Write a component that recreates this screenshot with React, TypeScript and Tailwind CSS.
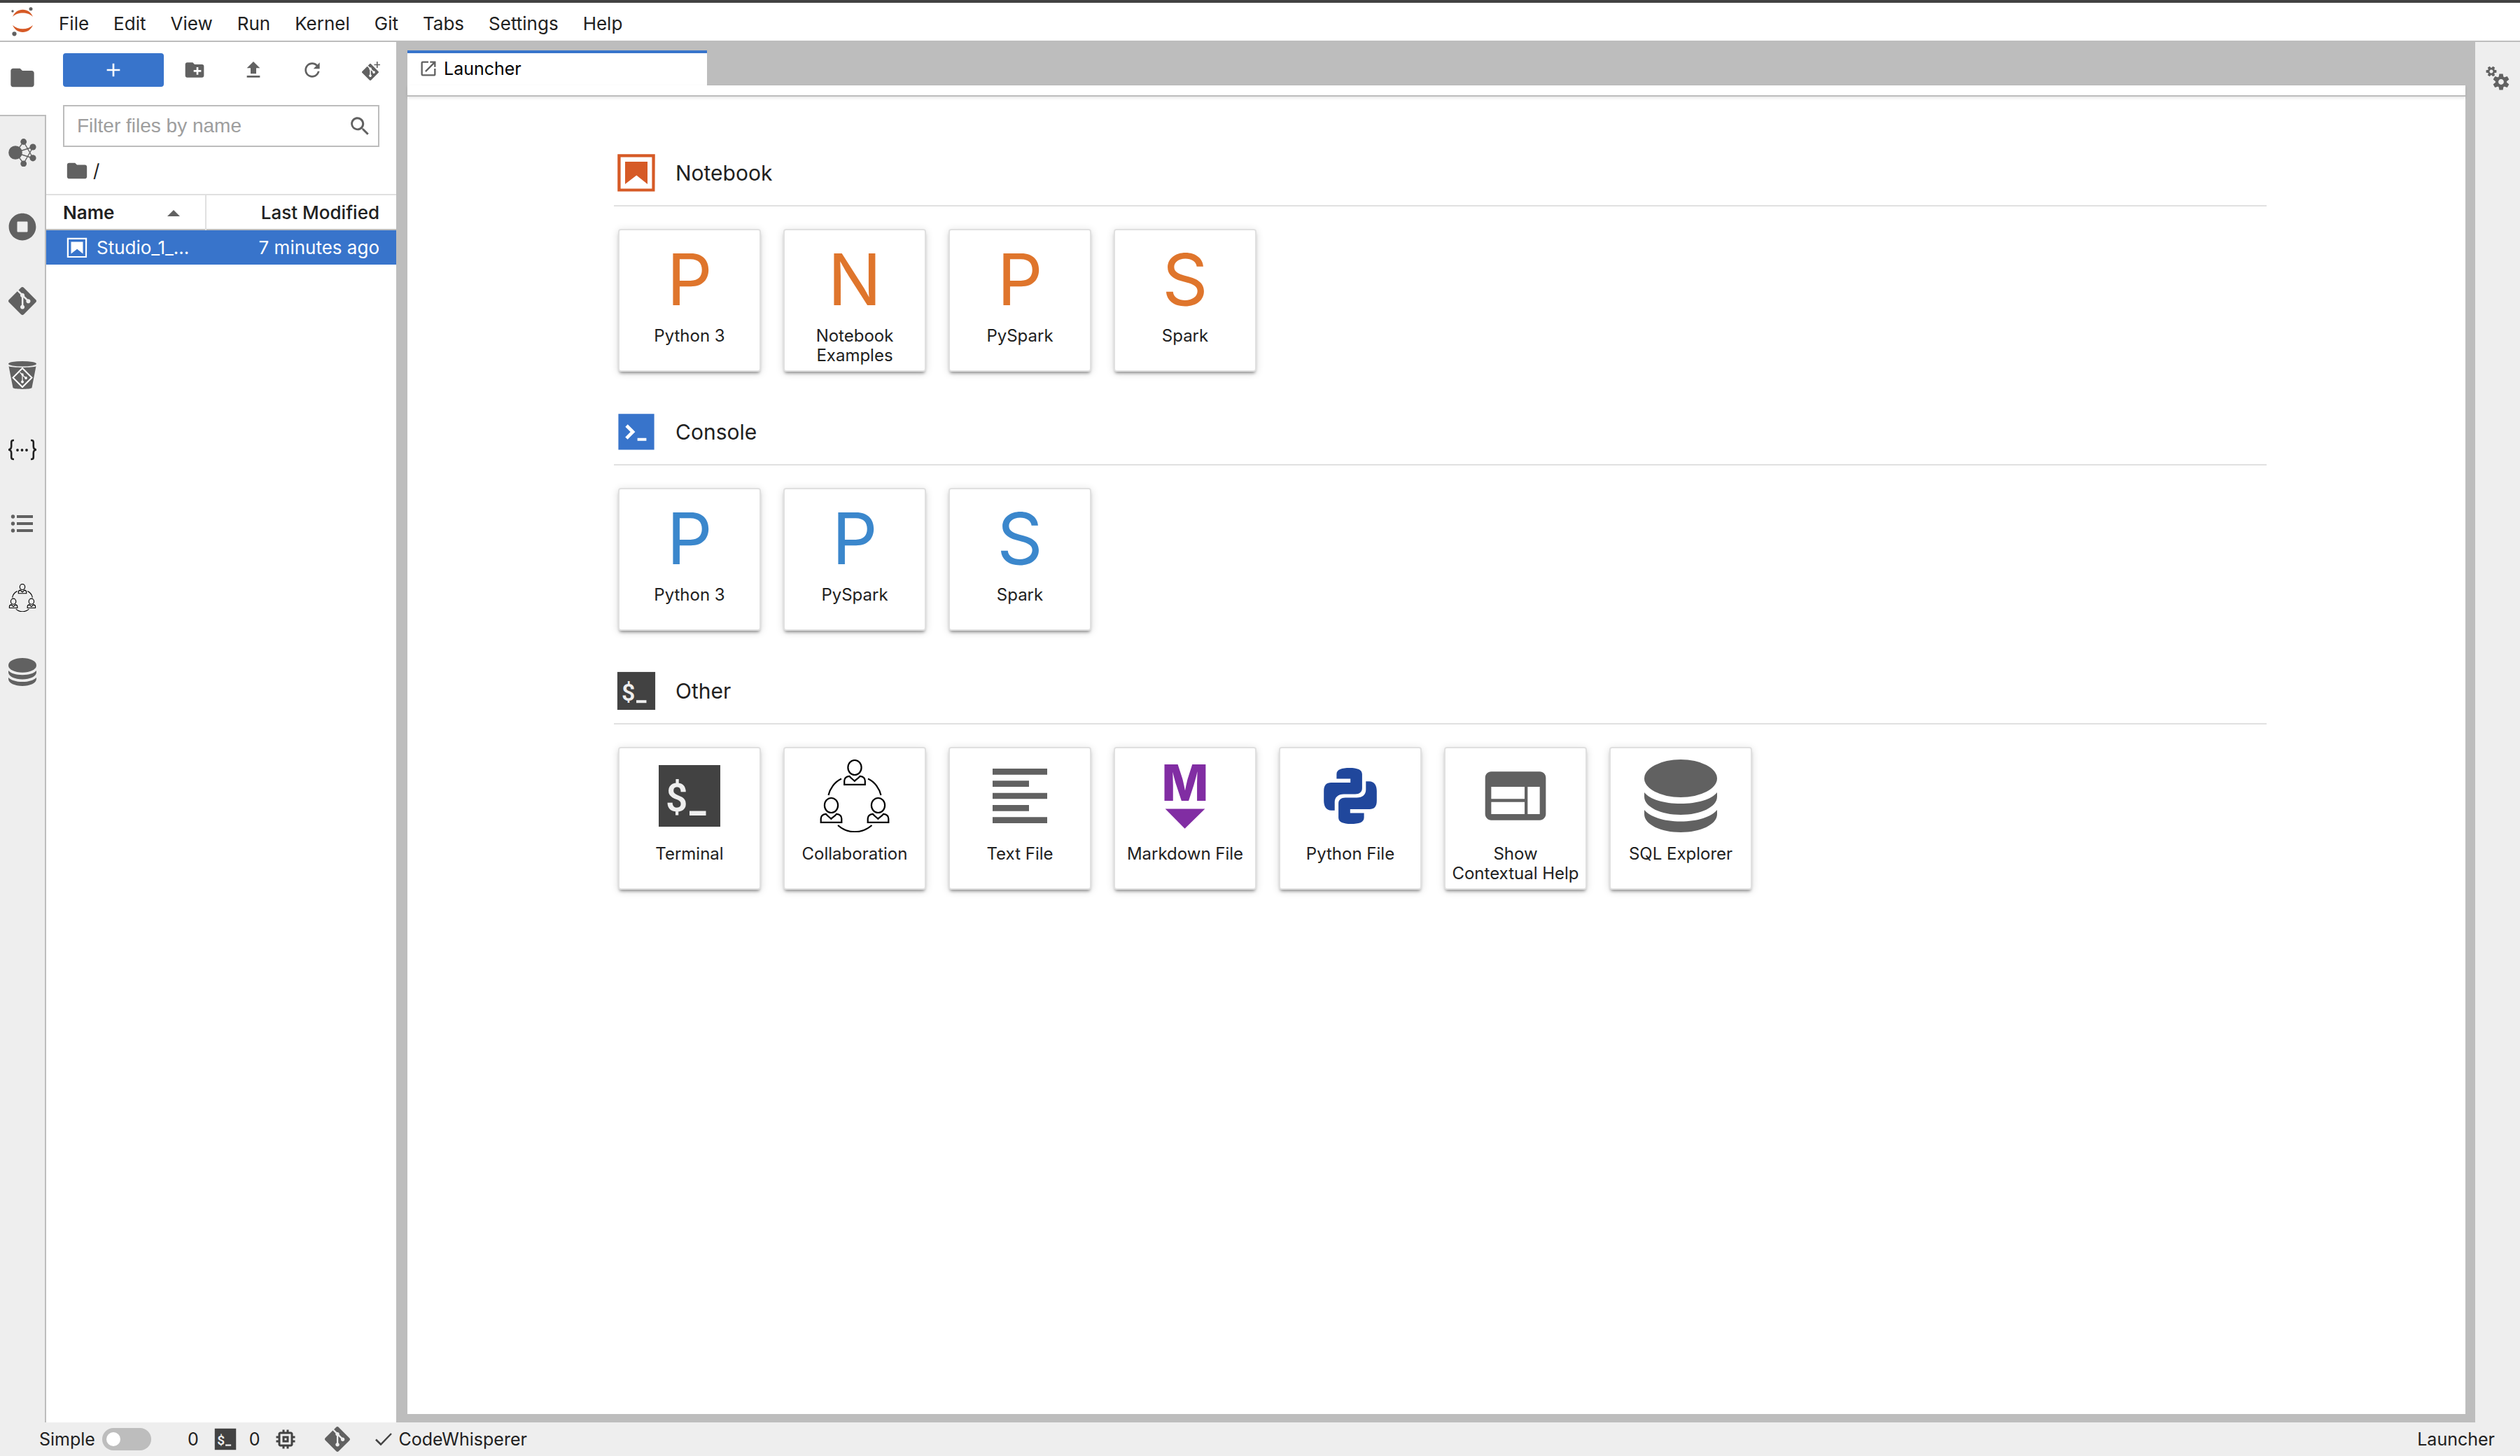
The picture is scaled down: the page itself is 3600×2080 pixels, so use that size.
import type { ReactNode } from "react";

type IconProps = { className?: string };

const GIT_PATH =
  "M23.546 10.93L13.067.452c-.604-.603-1.582-.603-2.188 0L8.708 2.627l2.76 2.76c.645-.215 1.379-.07 1.889.441.516.515.658 1.258.438 1.9l2.658 2.66c.645-.223 1.387-.078 1.9.435.721.72.721 1.884 0 2.604-.719.719-1.881.719-2.6 0-.539-.541-.674-1.337-.404-1.996L12.86 8.955v6.525c.176.086.342.203.488.348.713.721.713 1.883 0 2.6-.719.721-1.889.721-2.609 0-.719-.719-.719-1.879 0-2.598.182-.18.387-.316.605-.406V8.835c-.217-.091-.424-.222-.6-.401-.545-.545-.676-1.342-.396-2.009L7.636 3.7.45 10.881c-.6.605-.6 1.584 0 2.189l10.48 10.477c.604.604 1.582.604 2.186 0l10.43-10.43c.605-.603.605-1.582 0-2.187";

// Single-path icons on a square grid
function Glyph({ d, box = 24, className = "size-8" }: IconProps & { d: string; box?: number }) {
  return (
    <svg viewBox={`0 0 ${box} ${box}`} fill="currentColor" className={className} aria-hidden="true">
      <path d={d} />
    </svg>
  );
}

const paths = {
  folder: "M10 4H4c-1.1 0-1.99.9-1.99 2L2 18c0 1.1.9 2 2 2h16c1.1 0 2-.9 2-2V8c0-1.1-.9-2-2-2h-8l-2-2z",
  newFolder:
    "M20 6h-8l-2-2H4c-1.11 0-1.99.89-1.99 2L2 18c0 1.11.89 2 2 2h16c1.11 0 2-.89 2-2V8c0-1.11-.89-2-2-2zm-1 8h-3v3h-2v-3h-3v-2h3V9h2v3h3v2z",
  upload: "M9 16h6v-6h4l-7-7-7 7h4zm-4 2h14v2H5z",
  refresh:
    "M9 13.5c-2.49 0-4.5-2.01-4.5-4.5S6.51 4.5 9 4.5c1.24 0 2.36.52 3.17 1.33L10 8h5V3l-1.76 1.76C12.15 3.68 10.66 3 9 3 5.69 3 3.01 5.69 3.01 9S5.69 15 9 15c2.97 0 5.43-2.16 5.9-5h-1.52c-.46 2-2.24 3.5-4.38 3.5z",
  add: "M19 13h-6v6h-2v-6H5v-2h6V5h2v6h6v2z",
  search:
    "M12.1,10.9h-0.7l-0.2-0.2c0.8-0.9,1.3-2.2,1.3-3.5c0-3-2.4-5.4-5.4-5.4S1.8,4.2,1.8,7.1s2.4,5.4,5.4,5.4c1.3,0,2.5-0.5,3.5-1.3l0.2,0.2v0.7l4.1,4.1l1.2-1.2L12.1,10.9z M7.1,10.9c-2.1,0-3.7-1.7-3.7-3.7s1.7-3.7,3.7-3.7s3.7,1.7,3.7,3.7S9.2,10.9,7.1,10.9z",
  running:
    "M256 8C119 8 8 119 8 256s111 248 248 248 248-111 248-248S393 8 256 8zm96 328c0 8.8-7.2 16-16 16H176c-8.8 0-16-7.2-16-16V176c0-8.8 7.2-16 16-16h160c8.8 0 16 7.2 16 16v160z",
  launcher:
    "M19 19H5V5h7V3H5a2 2 0 00-2 2v14a2 2 0 002 2h14c1.1 0 2-.9 2-2v-7h-2v7zM14 3v2h3.59l-9.83 9.83 1.41 1.41L19 6.41V10h2V3h-7z",
  notebook: "M18.7 3.3v15.4H3.3V3.3h15.4m1.5-1.5H1.8v18.3h18.3l.1-18.3zM16.5 16.5l-5.4-4.3-5.6 4.3v-11h11z",
  textFile: "M15 15H3v2h12v-2zm0-8H3v2h12V7zM3 13h18v-2H3v2zm0 8h18v-2H3v2zM3 3v2h18V3H3z",
  inspector:
    "M20 4H4c-1.1 0-1.99.9-1.99 2L2 18c0 1.1.9 2 2 2h16c1.1 0 2-.9 2-2V6c0-1.1-.9-2-2-2zm-5 14H4v-4h11v4zm0-5H4V9h11v4zm5 5h-4V9h4v9z",
  chip: "M15 9H9v6h6V9zm-2 4h-2v-2h2v2zm8-2V9h-2V7c0-1.1-.9-2-2-2h-2V3h-2v2h-2V3H9v2H7c-1.1 0-2 .9-2 2v2H3v2h2v2H3v2h2v2c0 1.1.9 2 2 2h2v2h2v-2h2v2h2v-2h2c1.1 0 2-.9 2-2v-2h2v-2h-2v-2h2zm-4 6H7V7h10v10z",
};

function JupyterLogo() {
  return (
    <svg viewBox="0 0 32 42" className="h-[42px] w-8" aria-hidden="true">
      <path d="M2 14C5 7 10 3.700 16.500 3.700S28 7 31 14C27 10 22 8.500 16.500 8.500S6 10 2 14z" fill="#d65a26" />
      <path d="M2 26C5 32.500 10 36 16.500 36S28 32.500 31 26C27 29.500 22 31.200 16.500 31.200S6 29.500 2 26z" fill="#d65a26" />
      <circle cx="28" cy="2.700" r="2.500" fill="#616161" />
      <circle cx="2" cy="6" r="1.700" fill="#616161" />
      <circle cx="4.500" cy="38.300" r="3.100" fill="#616161" />
    </svg>
  );
}

function GitCloneIcon() {
  return (
    <svg viewBox="0 0 32 32" fill="currentColor" className="size-8" aria-hidden="true">
      <path d={GIT_PATH} transform="translate(3 7)" />
      <path d="M24 4h1.600v3.700H29v1.600h-3.400V13H24V9.300h-3.500V7.700H24z" />
    </svg>
  );
}

function GraphIcon() {
  return (
    <svg viewBox="0 0 40 40" fill="currentColor" className="size-10" aria-hidden="true">
      <path
        d="M10 20L21.700 4.500L35 27.500M10 20L21.700 35.500L35 12.500M10 20L35 12M10 20L35 28"
        fill="none"
        stroke="currentColor"
        strokeWidth="1.400"
      />
      <circle cx="10" cy="20" r="9.800" />
      <circle cx="21.700" cy="4.500" r="4.400" />
      <circle cx="35" cy="12" r="4.600" />
      <circle cx="35" cy="27.800" r="4.600" />
      <circle cx="21.700" cy="35.800" r="4.400" />
    </svg>
  );
}

function GitBucketIcon() {
  return (
    <svg viewBox="0 0 40 40" fill="currentColor" className="size-10" aria-hidden="true">
      <ellipse cx="20" cy="3.800" rx="20" ry="3.800" />
      <path d="M.5 7.200C6 9.500 34 9.500 39.500 7.200L33.500 38C31 40.500 9 40.500 6.500 38z" />
      <path d="M20 10L33.500 23.500L20 37L6.500 23.500z" fill="none" stroke="#fff" strokeWidth="2" />
      <path d="M16.500 16L20 19.500V30M20 19.500L25 24.500" fill="none" stroke="#fff" strokeWidth="1.200" />
      <circle cx="20" cy="29.500" r="1.900" fill="#fff" />
      <circle cx="25" cy="24" r="1.900" fill="#fff" />
      <circle cx="20" cy="19" r="1.700" fill="#fff" />
    </svg>
  );
}

function SnippetsIcon() {
  return (
    <svg viewBox="0 0 40 40" className="size-10 text-[#212121]" aria-hidden="true">
      <g fill="none" stroke="currentColor" strokeWidth="2.600">
        <path d="M8 7H7Q4.200 7 4.200 10V15.500Q4.200 20 0 20.500Q4.200 21 4.200 25V31Q4.200 34 7 34H8" />
        <path d="M32 7H33Q35.800 7 35.800 10V15.500Q35.800 20 40 20.500Q35.800 21 35.800 25V31Q35.800 34 33 34H32" />
      </g>
      <g fill="currentColor">
        <circle cx="13" cy="21" r="1.900" />
        <circle cx="19.500" cy="21" r="1.900" />
        <circle cx="26" cy="21" r="1.900" />
      </g>
    </svg>
  );
}

function TocIcon() {
  return (
    <svg viewBox="0 0 40 40" fill="currentColor" className="size-10" aria-hidden="true">
      {[10, 20, 30].map((y) => (
        <g key={y}>
          <circle cx="6.500" cy={y} r="2.700" />
          <rect x="12" y={y - 2} width="23" height="4" />
        </g>
      ))}
    </svg>
  );
}

function Person({ x, y }: { x: number; y: number }) {
  return (
    <g transform={`translate(${x} ${y})`}>
      <ellipse cx="0" cy="11.500" rx="9.600" ry="10.500" />
      <path d="M-14.800 35.800V30.500C-14.800 26.500-12 24.300-7.500 23.800C-5.500 26.500-3 28-.2 30.800C3 28 5.500 26.500 7.500 23.800C12 24.300 14.800 26.500 14.800 30.500V35.800z" />
    </g>
  );
}

function CollaborationIcon({ className, weight = 2.2 }: IconProps & { weight?: number }) {
  return (
    <svg viewBox="0 0 104 104" fill="none" stroke="#000" strokeWidth={weight} className={className} aria-hidden="true">
      <Person x={52} y={0} />
      <Person x={18.5} y={54} />
      <Person x={85.5} y={54} />
      <path d="M14.500 51C16.500 42 23 32 33 27.500M71 27.500C81 32 87.500 42 89.500 51M28 94C42 106.500 62 106.500 76.500 94" />
    </svg>
  );
}

function DatabaseIcon({ className }: IconProps) {
  return (
    <svg viewBox="0 0 104 104" fill="currentColor" className={className} aria-hidden="true">
      <ellipse cx="52" cy="27" rx="52" ry="27" />
      <path d="M0 47C8 57 28 63 52 63S96 57 104 47V53C104 68 80 79 52 79S0 68 0 53z" />
      <path d="M0 72C8 82 28 88.500 52 88.500S96 82 104 72V78C104 93 80 104 52 104S0 93 0 78z" />
    </svg>
  );
}

function TerminalIcon({ className }: IconProps) {
  return (
    <svg viewBox="0 0 104 104" className={className} aria-hidden="true">
      <rect x="8" y="8" width="88" height="88" fill="#424242" />
      <text x="18" y="74" fontSize="55" fontWeight="600" fill="#eee" className="font-[Roboto,sans-serif]">
        $
      </text>
      <rect x="52" y="73.500" width="23.500" height="6.500" fill="#eee" />
    </svg>
  );
}

function ConsoleIcon({ className }: IconProps) {
  return (
    <svg viewBox="0 0 200 200" className={className} aria-hidden="true">
      <path d="M20 19.800h160v159.900H20z" fill="#3874cb" />
      <path
        d="M105 127.300h40v12.800h-40zM51.100 77L74 99.900l-23.300 23.300 10.500 10.500 23.300-23.300L95 99.900 84.500 89.400 61.600 66.500z"
        fill="#fff"
      />
    </svg>
  );
}

function MarkdownIcon({ className }: IconProps) {
  return (
    <svg viewBox="0 0 22 22" fill="#812da3" overflow="visible" className={className} aria-hidden="true">
      <text x="11" y="12.400" fontSize="15" fontWeight="800" textAnchor="middle" className="font-[Inter,sans-serif]">
        M
      </text>
      <path d="M5 14.900h12l-6.100 6z" />
    </svg>
  );
}

function PythonIcon({ className }: IconProps) {
  const half =
    "M32.400 27.500V21C32.400 14 40 12 51 12C62 12 68.900 14.500 68.900 21V41C68.900 46.500 65 49.500 59 49.500H43C34.500 49.500 29.700 54 29.700 61V72.700H25C17 72.700 14.200 66 14.200 59V45C14.200 36.500 18 33 24.500 33H52.200V27.500z";
  return (
    <svg viewBox="0 0 104 104" fill="#20479c" className={className} aria-hidden="true">
      <path d={half} />
      <path d={half} transform="rotate(180 52 52)" />
    </svg>
  );
}

function Gear({ x, y, scale, turn }: { x: number; y: number; scale: number; turn: number }) {
  return (
    <g transform={`translate(${x} ${y}) rotate(${turn}) scale(${scale})`}>
      <circle r="6" fill="none" stroke="currentColor" strokeWidth="4.200" />
      {[0, 60, 120, 180, 240, 300].map((angle) => (
        <path key={angle} d="M-3.400-7L-2.600-11.600H2.600L3.400-7z" transform={`rotate(${angle})`} />
      ))}
    </g>
  );
}

function GearsIcon() {
  return (
    <svg viewBox="0 0 40 40" fill="currentColor" className="size-10" aria-hidden="true">
      <Gear x={11} y={10} scale={0.64} turn={30} />
      <Gear x={25} y={25} scale={1} turn={0} />
    </svg>
  );
}

function KernelLetter({ letter, className }: IconProps & { letter: string }) {
  return (
    <span className={`flex h-[104px] items-center justify-center pt-1 text-[102px] leading-none ${className}`}>
      {letter}
    </span>
  );
}

const menus = ["File", "Edit", "View", "Run", "Kernel", "Git", "Tabs", "Settings", "Help"];

const sidebarTabs: { name: string; icon: ReactNode }[] = [
  { name: "SageMaker graph", icon: <GraphIcon /> },
  { name: "Running terminals and kernels", icon: <Glyph d={paths.running} box={512} className="size-10" /> },
  { name: "Git", icon: <Glyph d={GIT_PATH} className="size-10" /> },
  { name: "Repositories", icon: <GitBucketIcon /> },
  { name: "Code snippets", icon: <SnippetsIcon /> },
  { name: "Table of contents", icon: <TocIcon /> },
  { name: "Collaboration", icon: <CollaborationIcon className="size-10" weight={3} /> },
  { name: "SQL Explorer", icon: <DatabaseIcon className="size-10" /> },
];

const toolbar: { name: string; icon: ReactNode }[] = [
  { name: "New folder", icon: <Glyph d={paths.newFolder} /> },
  { name: "Upload files", icon: <Glyph d={paths.upload} /> },
  { name: "Refresh file list", icon: <Glyph d={paths.refresh} box={18} /> },
  { name: "Clone repository", icon: <GitCloneIcon /> },
];

type CardData = { label: string; icon: ReactNode };

const orange = "text-[#df752c]";
const blue = "text-[#3b87cc]";
const big = "size-[104px]";

const sections: { title: string; icon: ReactNode; cards: CardData[] }[] = [
  {
    title: "Notebook",
    icon: <Glyph d={paths.notebook} box={22} className="size-16 text-[#d65a26]" />,
    cards: [
      { label: "Python 3", icon: <KernelLetter letter="P" className={orange} /> },
      { label: "Notebook\nExamples", icon: <KernelLetter letter="N" className={orange} /> },
      { label: "PySpark", icon: <KernelLetter letter="P" className={orange} /> },
      { label: "Spark", icon: <KernelLetter letter="S" className={orange} /> },
    ],
  },
  {
    title: "Console",
    icon: <ConsoleIcon className="size-16" />,
    cards: [
      { label: "Python 3", icon: <KernelLetter letter="P" className={blue} /> },
      { label: "PySpark", icon: <KernelLetter letter="P" className={blue} /> },
      { label: "Spark", icon: <KernelLetter letter="S" className={blue} /> },
    ],
  },
  {
    title: "Other",
    icon: <TerminalIcon className="size-16" />,
    cards: [
      { label: "Terminal", icon: <TerminalIcon className={big} /> },
      { label: "Collaboration", icon: <CollaborationIcon className={big} /> },
      { label: "Text File", icon: <Glyph d={paths.textFile} className={big} /> },
      { label: "Markdown File", icon: <MarkdownIcon className={big} /> },
      { label: "Python File", icon: <PythonIcon className={big} /> },
      { label: "Show\nContextual Help", icon: <Glyph d={paths.inspector} className={big} /> },
      { label: "SQL Explorer", icon: <DatabaseIcon className={big} /> },
    ],
  },
];

function MenuBar() {
  return (
    <header className="flex h-[60px] items-center border-t-4 border-b-2 border-t-[#424242] border-b-[#bdbdbd] bg-white pl-4">
      <JupyterLogo />
      <nav className="ml-[19px] flex gap-px pt-[6px] text-[26px]">
        {menus.map((menu) => (
          <button key={menu} className="px-[17px]">
            {menu}
          </button>
        ))}
      </nav>
    </header>
  );
}

function LeftSidebar() {
  return (
    <div className="flex w-[66px] shrink-0 flex-col bg-[#eee] text-[#616161]">
      <button
        aria-label="File browser"
        className="flex h-[106px] items-center border-b-2 border-[#bdbdbd] bg-white pb-0.5 pl-3"
      >
        <Glyph d={paths.folder} className="size-10" />
      </button>
      {sidebarTabs.map((tab) => (
        <button
          key={tab.name}
          aria-label={tab.name}
          className="flex h-[106px] items-center border-r-2 border-[#bdbdbd] pb-0.5 pl-3"
        >
          {tab.icon}
        </button>
      ))}
      <div className="flex-1 border-r-2 border-[#bdbdbd]" />
    </div>
  );
}

function FileBrowser() {
  return (
    <aside className="w-[500px] shrink-0 bg-white">
      <div className="flex items-center pt-4 pl-6">
        <button
          aria-label="New launcher"
          className="flex h-12 w-36 shrink-0 items-center justify-center rounded-sm bg-[#3874cb] text-white"
        >
          <Glyph d={paths.add} />
        </button>
        <div className="ml-7 flex gap-[52px] text-[#616161]">
          {toolbar.map((item) => (
            <button key={item.name} aria-label={item.name}>
              {item.icon}
            </button>
          ))}
        </div>
      </div>

      <label className="mx-6 mt-[26px] flex h-[60px] items-center border-2 border-[#bdbdbd] pr-[10px] pl-[18px] text-[#616161]">
        <input
          type="text"
          aria-label="Filter files by name"
          placeholder="Filter files by name"
          className="min-w-0 flex-1 font-['Liberation_Sans',sans-serif] text-[28px] outline-none placeholder:text-[#9e9e9e]"
        />
        <Glyph d={paths.search} box={18} />
      </label>

      <div className="flex h-[67px] items-center gap-[6px] pl-[27px]">
        <Glyph d={paths.folder} className="size-[34px] text-[#616161]" />
        <a href="#root" aria-label="Root folder" className="text-[26px]">
          /
        </a>
      </div>

      <table className="w-full table-fixed text-[26px]">
        <thead>
          <tr className="h-[50px] border-t-2 border-b-2 border-t-[#e0e0e0] border-b-[#bdbdbd]">
            <th className="w-[228px] border-r-2 border-r-[#e0e0e0] pt-0.5 pr-9 pl-6">
              <button className="flex w-full items-center justify-between font-semibold">
                Name
                <svg viewBox="0 0 18 9" className="h-[9px] w-[18px] fill-[#616161]" aria-hidden="true">
                  <path d="M0 9L9 0L18 9z" />
                </svg>
              </button>
            </th>
            <th className="pt-0.5 pr-6 text-right font-medium">
              <button>Last Modified</button>
            </th>
          </tr>
        </thead>
        <tbody>
          <tr className="h-[50px] bg-[#3874cb] text-white">
            <td className="pl-[27px]">
              <div className="flex items-center gap-[11px]">
                <Glyph d={paths.notebook} box={22} className="size-[34px] shrink-0" />
                Studio_1_...
              </div>
            </td>
            <td className="pr-6 text-right">7 minutes ago</td>
          </tr>
        </tbody>
      </table>
    </aside>
  );
}

function LauncherCard({ label, icon }: CardData) {
  return (
    <button className="flex size-[204px] flex-col items-center rounded border-2 border-[#e0e0e0] bg-white pt-4 text-[#616161] shadow-[0_4px_4px_-2px_rgba(0,0,0,0.4),0_2px_12px_rgba(0,0,0,0.14)]">
      {icon}
      <span className="mt-[17px] text-2xl leading-7 whitespace-pre-line text-[#212121]">{label}</span>
    </button>
  );
}

function Launcher() {
  return (
    <main className="flex min-w-0 flex-1 flex-col bg-[#bdbdbd] pt-3 pr-[14px] pb-3 pl-4">
      <div className="flex h-[50px]">
        <div className="flex w-[428px] items-center gap-2 border-t-4 border-[#3874cb] bg-white pb-0.5 pl-4 text-black">
          <Glyph d={paths.launcher} className="size-7 text-[#616161]" />
          Launcher
        </div>
      </div>
      <div className="relative h-4 border-b-2 border-[#bdbdbd] bg-white shadow-[0_2px_4px_rgba(0,0,0,0.1)]" />
      <div className="flex-1 bg-white pt-[63px] pr-[284px] pl-[295px]">
        {sections.map((section) => (
          <section key={section.title} className="mb-10">
            <div className="flex h-[94px] items-center gap-6 border-b-2 border-[#e0e0e0]">
              {section.icon}
              <h2 className="text-[30px]">{section.title}</h2>
            </div>
            <div className="mt-8 flex flex-wrap gap-8 pl-[6px]">
              {section.cards.map((card) => (
                <LauncherCard key={card.label} {...card} />
              ))}
            </div>
          </section>
        ))}
      </div>
    </main>
  );
}

function StatusBar() {
  return (
    <footer className="flex h-12 items-center bg-[#eee] pr-9 pl-14">
      <label className="flex items-center gap-[10px]">
        Simple
        <input
          type="checkbox"
          role="switch"
          className="flex h-8 w-[70px] appearance-none items-center rounded-full bg-[#bdbdbd] pl-[6px] before:size-5 before:rounded-full before:bg-white before:content-['']"
        />
      </label>
      <button className="ml-[52px]">0</button>
      <button className="ml-5 flex items-center gap-4">
        <TerminalIcon className="size-9" />
        0
      </button>
      <button aria-label="Kernel usage" className="ml-[18px] text-[#424242]">
        <Glyph d={paths.chip} className="size-9" />
      </button>
      <button aria-label="Git status" className="ml-[38px] text-[#616161]">
        <Glyph d={GIT_PATH} className="size-9" />
      </button>
      <button className="ml-9 flex items-center gap-[10px]">
        <svg viewBox="0 0 24 18" fill="none" stroke="#424242" strokeWidth="2.500" className="h-[18px] w-6" aria-hidden="true">
          <path d="M1 9.500L8 16.500L23 1" />
        </svg>
        CodeWhisperer
      </button>
      <span className="ml-auto">Launcher</span>
    </footer>
  );
}

export default function App() {
  return (
    <div className="flex min-h-screen flex-col bg-[#eee] font-[Inter,sans-serif] text-[25px] leading-8 text-[#212121]">
      <MenuBar />
      <div className="flex flex-1">
        <LeftSidebar />
        <FileBrowser />
        <Launcher />
        <div className="w-16 shrink-0 bg-[#eee] text-[#616161]">
          <button aria-label="Property inspector" className="flex h-[104px] w-full items-center justify-center">
            <GearsIcon />
          </button>
        </div>
      </div>
      <StatusBar />
    </div>
  );
}
